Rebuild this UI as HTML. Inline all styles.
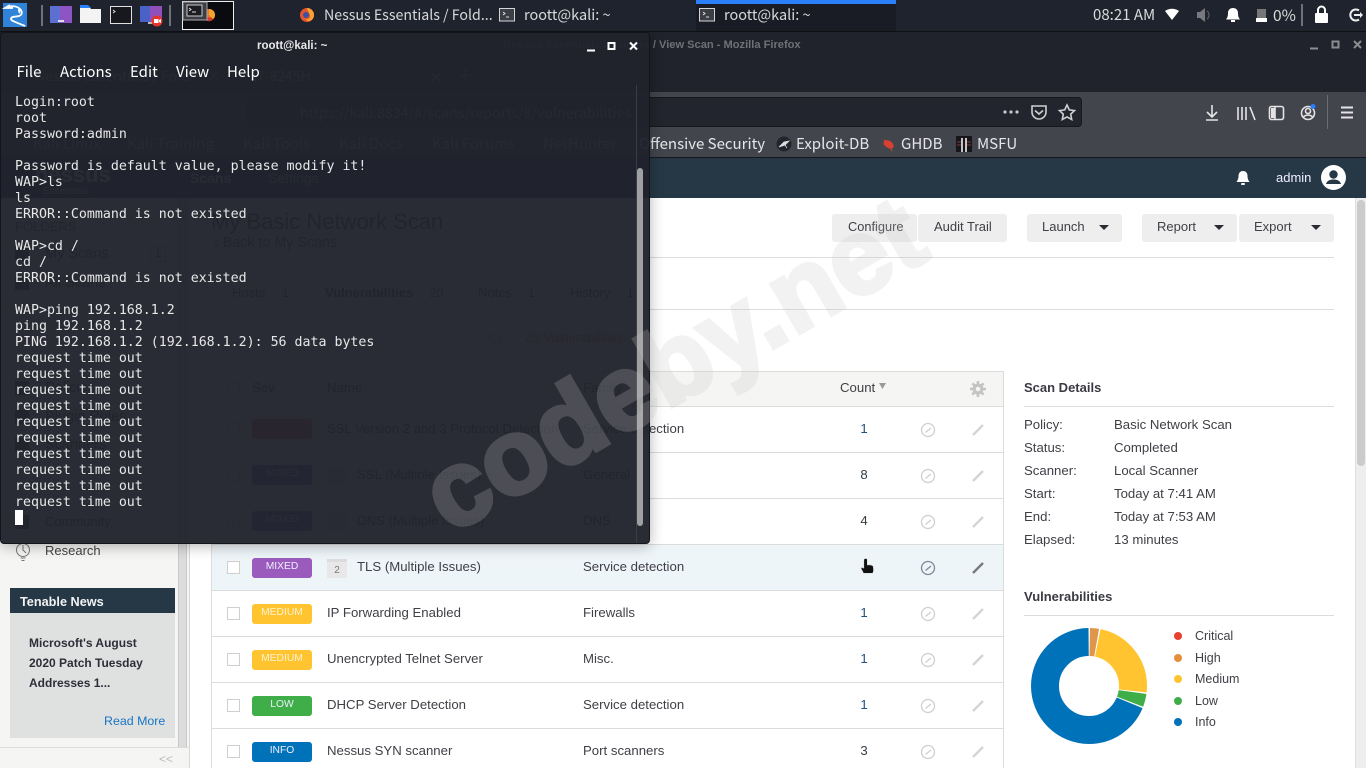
<!DOCTYPE html>
<html lang="en"><head><meta charset="utf-8"><title>Nessus Essentials</title>
<style>
*{box-sizing:border-box}
html,body{margin:0;padding:0;width:1366px;height:768px;overflow:hidden;background:#fff}
body{position:relative;font-family:"Liberation Sans",sans-serif;font-size:13.2px;color:#3f3f46}
.a{position:absolute}
.t{position:absolute;white-space:nowrap;line-height:16px;height:16px}
.c{font-family:"Noto Sans CJK JP","Liberation Sans",sans-serif}
.box{position:absolute;left:227px;width:13px;height:13px;border:1px solid #cfcfcf;background:#fff}
.bd{position:absolute;left:252px;width:60px;height:20px;border-radius:3px;color:#eef;font-size:10.3px;line-height:18px;text-align:center}
.ln{position:absolute;background:#dcdcdc;height:1px}
.btn{position:absolute;top:214px;height:28px;background:#eee;border-radius:3px;color:#3f3f46;line-height:25px;text-align:left;font-size:13px}
.arr{position:absolute;top:11px;width:0;height:0;border-left:5px solid transparent;border-right:5px solid transparent;border-top:5px solid #2b2b33}
.cnt{position:absolute;left:844px;width:40px;text-align:center;color:#24507c;line-height:16px}
.dk{color:#333d48}
.mn{position:absolute;color:#fff;font-size:15px;line-height:18px;top:63px}
svg{position:absolute;overflow:visible}
#term pre{position:absolute;left:14px;top:62px;margin:0;font:13.28px/16px "DejaVu Sans Mono",monospace;color:#e8e8e8}
</style></head><body>

<!-- firefox window -->
<div class="a" style="left:0;top:32px;width:1366px;height:60px;background:#20232c"></div>
<div class="t" style="left:503px;top:37px;font-size:11.1px;font-weight:bold;color:#6f7178">Nessus Essentials / Folders / View Scan - Mozilla Firefox</div>
<svg style="left:0;top:0" width="1366" height="60"><path d="M1310 48.500h8" stroke="#8a8c91" stroke-width="2"/><rect x="1332.500" y="41.500" width="6" height="6" fill="none" stroke="#8a8c91" stroke-width="2"/><path d="M1354 41l7 7M1361 41l-7 7" stroke="#8a8c91" stroke-width="2"/></svg>
<div class="a" style="left:225px;top:60px;width:220px;height:32px;background:#2a2c35"></div>
<div class="t c" style="left:35px;top:68px;font-size:14px;color:#b5b7bb">Nessus Essentials / Fold</div>
<div class="t c" style="left:207px;top:68px;font-size:14px;color:#b5b7bb">×</div>
<div class="t c" style="left:253px;top:68px;font-size:14px;color:#b5b7bb">i7-8245H</div>
<div class="t c" style="left:428px;top:68px;font-size:16px;color:#b5b7bb">×</div>
<svg style="left:458px;top:68px" width="16" height="16"><path d="M7.500 1v13M1 7.500h13" stroke="#83858a" stroke-width="1.500"/></svg>
<div class="a" style="left:0;top:92px;width:1366px;height:66px;background:#43454d"></div>
<div class="a" style="left:247px;top:97px;width:835px;height:30px;background:#23252e;border-radius:4px;border:1px solid #17181e"></div>
<div class="t c" style="left:300px;top:105px;font-size:14.2px;color:#a8a8ac">https://kali:8834/#/scans/reports/8/vulnerabilities</div>
<div class="a" style="left:0;top:157px;width:1366px;height:1px;background:#17181e"></div>
<svg style="left:1000px;top:100px" width="360" height="28" fill="none" stroke="#e4e4e6" stroke-width="1.600">
<circle cx="5" cy="12" r="1.600" fill="#c8c8ca" stroke="none"/><circle cx="11" cy="12" r="1.600" fill="#c8c8ca" stroke="none"/><circle cx="17" cy="12" r="1.600" fill="#c8c8ca" stroke="none"/>
<path d="M32 6h14v6a7 7 0 0 1-14 0z" stroke="#cfcfd2"/><path d="M35 10.500l4 3.500 4-3.500" stroke="#cfcfd2"/>
<path d="M67 5l2.300 4.900 5.200.7-3.800 3.600 1 5.300-4.700-2.600-4.700 2.600 1-5.300-3.800-3.600 5.200-.7z" stroke="#cfcfd2"/>
<path d="M212 5v12M207 12l5 5 5-5M206 20h12"/>
<path d="M238 7v13M242 7v13M246 7v13M250 7l5 13"/>
<rect x="269.500" y="6.500" width="14" height="13" rx="2"/><path d="M275 7v12"/><path d="M271 8h4v10h-4z" fill="#e4e4e6" stroke="none"/>
<circle cx="308" cy="13" r="6.500"/><circle cx="308" cy="11" r="2.500"/><path d="M303.500 17c2-2.500 7-2.500 9 0"/>
<path d="M341 7.500h12M341 12.500h12M341 17.500h12" stroke-width="2"/></svg>
<svg style="left:1304px;top:102px" width="10" height="10"><circle cx="9" cy="4.500" r="2.500" fill="#2a7ffb"/></svg>
<div class="a" style="left:1327px;top:95px;width:1px;height:34px;background:#6a6c73"></div>
<div class="t c" style="left:33px;top:136px;font-size:15px;color:#b8babe">Kali Linux</div>
<div class="t c" style="left:127px;top:136px;font-size:15px;color:#b8babe">Kali Training</div>
<div class="t c" style="left:243px;top:136px;font-size:15px;color:#b8babe">Kali Tools</div>
<div class="t c" style="left:339px;top:136px;font-size:15px;color:#b8babe">Kali Docs</div>
<div class="t c" style="left:432px;top:136px;font-size:15px;color:#b8babe">Kali Forums</div>
<div class="t c" style="left:543px;top:136px;font-size:15px;color:#b8babe">NetHunter</div>
<div class="t c" style="left:639px;top:136px;font-size:15px;color:#e6e6e8">Offensive Security</div>
<div class="t c" style="left:796px;top:136px;font-size:15px;color:#e6e6e8">Exploit-DB</div>
<div class="t c" style="left:901px;top:136px;font-size:15px;color:#e6e6e8">GHDB</div>
<div class="t c" style="left:977px;top:136px;font-size:15px;color:#e6e6e8">MSFU</div>
<svg style="left:776px;top:136px" width="16" height="16"><circle cx="8" cy="8" r="7.500" fill="#23252e"/><path d="M3 11l5-5 5-1-4 4zM9 9l2 3" stroke="#ddd" fill="#ddd" stroke-width=".8"/></svg>
<svg style="left:882px;top:137px" width="14" height="14"><ellipse cx="7" cy="7.500" rx="5.500" ry="3.500" transform="rotate(35 7 7)" fill="#d8412f"/><path d="M2 3l3 2M1 7h3M9 12l1 2" stroke="#d8412f"/></svg>
<svg style="left:956px;top:136px" width="16" height="16"><rect width="16" height="16" fill="#17151a"/><path d="M6 2v14M10 2v14" stroke="#eee" stroke-width="1.600"/><path d="M1 6h4M11 6h4M1 9h4M11 9h4" stroke="#7c3b3b"/></svg>

<!-- nessus header -->
<div class="a" style="left:0;top:158px;width:1366px;height:40px;background:#263846"></div>
<div class="t" style="left:35px;top:163px;font-size:22px;line-height:24px;height:24px;font-weight:bold;color:#fff">nessus</div>
<div class="t" style="left:43px;top:184px;font-size:10px;color:#dde">Essentials</div>
<div class="t" style="left:190px;top:170px;font-size:14px;font-weight:bold;color:#d9dde0">Scans</div>
<div class="t" style="left:268px;top:170px;font-size:14px;color:#bbc3c9">Settings</div>
<svg style="left:1235px;top:170px" width="16" height="16" fill="#fff"><path d="M8 1c-3 0-4.500 2.300-4.500 5 0 3.500-1.500 5-2 6h13c-.5-1-2-2.500-2-6 0-2.700-1.500-5-4.500-5z"/><rect x="6" y="13" width="4" height="2" rx="1"/></svg>
<div class="t" style="left:1276px;top:170px;font-size:13px;color:#eef">admin</div>
<svg style="left:1321px;top:165px" width="25" height="25"><circle cx="12.500" cy="12.500" r="12.500" fill="#fff"/><circle cx="12.500" cy="9.500" r="4.200" fill="#263846"/><path d="M5 19c1-3.500 4-4.500 7.500-4.500S19 15.500 20 19z" fill="#263846"/></svg>

<!-- sidebar -->
<div class="a" style="left:0;top:198px;width:190px;height:570px;background:#f5f5f3"></div>
<div class="a" style="left:178px;top:198px;width:9px;height:549px;background:#dcdcdc;border-left:1px solid #c9c9c9;border-right:1px solid #c9c9c9"></div>
<div class="a" style="left:189px;top:198px;width:1px;height:570px;background:#d8d8d8"></div>
<div class="a" style="left:0;top:747px;width:190px;height:1px;background:#dcdcdc"></div>
<div class="t" style="left:159px;top:751px;color:#bcbcbc;font-size:12px">&lt;&lt;</div>
<div class="t" style="left:15px;top:219px;font-size:13px;color:#666">FOLDERS</div>
<div class="a" style="left:15px;top:247px;width:14px;height:14px;background:#555"></div>
<div class="t" style="left:45px;top:246px;color:#3f3f46;font-size:14.500px">My Scans</div>
<div class="a" style="left:150px;top:246px;width:16px;height:16px;border:1px solid #bbb;font-size:11px;line-height:14px;text-align:center">1</div>
<div class="a" style="left:15px;top:276px;width:14px;height:14px;background:#555"></div>
<div class="t" style="left:45px;top:275px;color:#3f3f46;font-size:14.500px">All Scans</div>
<div class="a" style="left:15px;top:381px;width:14px;height:14px;background:#555"></div>
<div class="t" style="left:45px;top:380px;font-size:14.500px">Policies</div>
<div class="a" style="left:15px;top:410px;width:14px;height:14px;background:#555"></div>
<div class="t" style="left:45px;top:409px;font-size:14.500px">Plugin Rules</div>
<div class="a" style="left:15px;top:438px;width:14px;height:14px;background:#555"></div>
<div class="t" style="left:45px;top:437px;font-size:14.500px">Scanners</div>
<div class="a" style="left:15px;top:515px;width:14px;height:14px;background:#555"></div>
<div class="t" style="left:45px;top:514px;font-size:13px">Community</div>
<svg style="left:16px;top:542px" width="16" height="20" fill="none" stroke="#777"><circle cx="7" cy="8" r="6.500"/><path d="M7 3v5l3 3M4.500 16h5M5.500 18.500h3"/></svg>
<div class="t" style="left:45px;top:543px;font-size:13px;color:#444">Research</div>
<div class="a" style="left:10px;top:588px;width:165px;height:150px;background:#dfe0e0"></div>
<div class="a" style="left:10px;top:588px;width:165px;height:25px;background:#263846"></div>
<div class="t" style="left:20px;top:594px;font-size:12.700px;font-weight:bold;color:#f2f2f2">Tenable News</div>
<div class="a" style="left:29px;top:633px;width:140px;font-size:12px;line-height:20px;font-weight:bold;color:#2e2e3a;white-space:nowrap">Microsoft's August<br>2020 Patch Tuesday<br>Addresses 1...</div>
<div class="t" style="left:104px;top:713px;font-size:12.400px;color:#1a75c4">Read More</div>

<!-- main -->
<div class="a" style="left:1355px;top:198px;width:11px;height:570px;background:#eee;border-left:1px solid #dedede"></div>
<div class="a" style="left:1357px;top:200px;width:8px;height:266px;border-radius:4px;background:#cbcbcb"></div>
<div class="t" style="left:211px;top:208px;height:28px;line-height:28px;font-size:22px;color:#444">My Basic Network Scan</div>
<div class="t" style="left:214px;top:235px;font-size:14.300px;color:#555">‹ Back to My Scans</div>
<div class="btn" style="left:832px;width:85px;padding-left:16px;font-size:12.800px">Configure</div>
<div class="btn" style="left:918px;width:89px;padding-left:16px">Audit Trail</div>
<div class="btn" style="left:1027px;width:95px;padding-left:15px">Launch<i class="arr" style="left:72px"></i></div>
<div class="btn" style="left:1142px;width:95px;padding-left:15px">Report<i class="arr" style="left:72px"></i></div>
<div class="btn" style="left:1239px;width:95px;padding-left:15px">Export<i class="arr" style="left:72px"></i></div>
<div class="ln" style="left:190px;top:257px;width:1144px"></div>
<div class="ln" style="left:190px;top:309px;width:1144px"></div>
<div class="t" style="left:232px;top:285px;font-size:13px">Hosts</div>
<div class="t" style="left:282px;top:285px;font-size:12px">1</div>
<div class="t" style="left:325px;top:285px;font-size:13px;font-weight:bold">Vulnerabilities</div>
<div class="t" style="left:430px;top:285px;font-size:12px">20</div>
<div class="t" style="left:478px;top:285px;font-size:13px">Notes</div>
<div class="t" style="left:528px;top:285px;font-size:12px">1</div>
<div class="t" style="left:570px;top:285px;font-size:13px">History</div>
<div class="t" style="left:627px;top:285px;font-size:12px">1</div>
<svg style="left:489px;top:332px" width="14" height="14" fill="none" stroke="#999"><circle cx="6" cy="6" r="5"/></svg>
<div class="t" style="left:525px;top:330px;font-size:13px;color:#c06060">20 Vulnerabilities</div>

<!-- table -->
<div class="a" style="left:211px;top:371px;width:793px;height:397px;border:1px solid #dcdcdc;border-bottom:0"></div>
<div class="a" style="left:212px;top:372px;width:791px;height:34px;background:#f5f5f3"></div>
<div class="ln" style="left:212px;top:406px;width:791px"></div>
<div class="ln" style="left:212px;top:452px;width:791px"></div>
<div class="ln" style="left:212px;top:498px;width:791px"></div>
<div class="a" style="left:212px;top:544px;width:791px;height:47px;background:#eef5f9;border-top:1px solid #dcdcdc;border-bottom:1px solid #dcdcdc"></div>
<div class="ln" style="left:212px;top:636px;width:791px"></div>
<div class="ln" style="left:212px;top:682px;width:791px"></div>
<div class="ln" style="left:212px;top:728px;width:791px"></div>

<div class="box" style="top:382px"></div>
<div class="t" style="left:252px;top:380px">Sev</div>
<div class="t" style="left:327px;top:380px">Name</div>
<div class="t" style="left:583px;top:380px">Family</div>
<div class="t" style="left:840px;top:380px">Count</div>
<svg style="left:879px;top:383px" width="8" height="7"><path d="M0 0h7L3.500 6z" fill="#9a9a9a"/></svg>
<svg style="left:970px;top:381px" width="16" height="16" fill="#c4c4c4"><path d="M8 2.500a5.500 5.500 0 1 0 0 11 5.500 5.500 0 0 0 0-11zm0 3.200a2.300 2.300 0 1 1 0 4.600 2.300 2.300 0 0 1 0-4.600z" fill-rule="evenodd"/><path d="M6.700 0h2.600v3H6.700zM6.700 13h2.600v3H6.700zM0 6.700h3v2.600H0zM13 6.700h3v2.600h-3zM1.500 3.300l1.800-1.800 2 2-1.800 1.800zM10.700 12.500l1.800-1.800 2 2-1.800 1.800zM12.700 1.500l1.800 1.800-2 2-1.800-1.800zM3.300 10.700l1.800 1.800-2 2-1.800-1.800z"/></svg>

<div class="box" style="top:423px"></div><div class="bd" style="top:419px;background:#c06a6a"></div>
<div class="t" style="left:327px;top:421px">SSL Version 2 and 3 Protocol Detection</div>
<div class="t" style="left:583px;top:421px">Service detection</div><div class="cnt" style="top:421px">1</div>

<div class="box" style="top:469px"></div><div class="bd" style="top:465px;background:#6470b5">MIXED</div>
<div class="a" style="left:327px;top:466px;width:20px;height:18px;background:#e3e3e3"></div>
<div class="t" style="left:357px;top:467px">SSL (Multiple Issues)</div>
<div class="t" style="left:583px;top:467px">General</div><div class="cnt dk" style="top:467px">8</div>

<div class="box" style="top:515px"></div><div class="bd" style="top:511px;background:#6470b5">MIXED</div>
<div class="a" style="left:327px;top:512px;width:20px;height:18px;background:#e3e3e3"></div>
<div class="t" style="left:357px;top:513px">DNS (Multiple Issues)</div>
<div class="t" style="left:583px;top:513px">DNS</div><div class="cnt dk" style="top:513px">4</div>

<div class="box" style="top:561px"></div><div class="bd" style="top:558px;background:#9a5bbd">MIXED</div>
<div class="a" style="left:327px;top:559px;width:20px;height:19px;background:#e8e8e8;font-size:10px;line-height:17px;text-align:center;color:#777;border-top:3px solid #dcdcdc">2</div>
<div class="t" style="left:357px;top:559px">TLS (Multiple Issues)</div>
<div class="t" style="left:583px;top:559px">Service detection</div>

<div class="box" style="top:607px"></div><div class="bd" style="top:604px;background:#ffc430;color:#fdf2d0">MEDIUM</div>
<div class="t" style="left:327px;top:605px">IP Forwarding Enabled</div>
<div class="t" style="left:583px;top:605px">Firewalls</div><div class="cnt" style="top:605px">1</div>

<div class="box" style="top:653px"></div><div class="bd" style="top:650px;background:#ffc430;color:#fdf2d0">MEDIUM</div>
<div class="t" style="left:327px;top:651px">Unencrypted Telnet Server</div>
<div class="t" style="left:583px;top:651px">Misc.</div><div class="cnt" style="top:651px">1</div>

<div class="box" style="top:699px"></div><div class="bd" style="top:696px;background:#3fae49">LOW</div>
<div class="t" style="left:327px;top:697px">DHCP Server Detection</div>
<div class="t" style="left:583px;top:697px">Service detection</div><div class="cnt" style="top:697px">1</div>

<div class="box" style="top:745px"></div><div class="bd" style="top:742px;background:#0072b9">INFO</div>
<div class="t" style="left:327px;top:743px">Nessus SYN scanner</div>
<div class="t" style="left:583px;top:743px">Port scanners</div><div class="cnt dk" style="top:743px">3</div>

<svg style="left:0;top:0" width="1366" height="768" fill="none">
<g stroke="#cfcfcf" stroke-width="1.300">
<circle cx="928" cy="430" r="6.500"/><path d="M925.500 432.500L931 428"/>
<circle cx="928" cy="476" r="6.500"/><path d="M925.500 478.500L931 474"/>
<circle cx="928" cy="522" r="6.500"/><path d="M925.500 524.500L931 520"/>
<circle cx="928" cy="614" r="6.500"/><path d="M925.500 616.500L931 612"/>
<circle cx="928" cy="660" r="6.500"/><path d="M925.500 662.500L931 658"/>
<circle cx="928" cy="706" r="6.500"/><path d="M925.500 708.500L931 704"/>
<circle cx="928" cy="752" r="6.500"/><path d="M925.500 754.500L931 750"/>
</g>
<g stroke="#7d8a94" stroke-width="1.300"><circle cx="928" cy="568" r="6.500"/><path d="M925.500 570.500L931 566"/></g>
<g stroke="#d4d4d4" stroke-width="2.400">
<path d="M973 435l10-10"/><path d="M973 481l10-10"/><path d="M973 527l10-10"/><path d="M973 619l10-10"/><path d="M973 665l10-10"/><path d="M973 711l10-10"/><path d="M973 757l10-10"/>
</g>
<path d="M973 573l10-10" stroke="#77797d" stroke-width="2.400"/>
</svg>
<svg style="left:860px;top:557px" width="16" height="18"><path d="M6 1.500c1 0 1.300.8 1.300 1.500v5l1-.3 1 .3 1-.2 1 .3 1.700.7.500 2.500v3l-.8 2H3.500L1 11.500l.8-1.300 2 1V3c0-.8 1-1.500 2.200-1.500z" fill="#111" stroke="#ddd" stroke-width=".6"/></svg>

<!-- details -->
<div class="t" style="left:1024px;top:380px;font-size:13px;font-weight:bold;color:#3a3a44">Scan Details</div>
<div class="ln" style="left:1024px;top:406px;width:310px"></div>
<div class="t" style="left:1024px;top:417px">Policy:</div><div class="t" style="left:1114px;top:417px">Basic Network Scan</div>
<div class="t" style="left:1024px;top:440px">Status:</div><div class="t" style="left:1114px;top:440px">Completed</div>
<div class="t" style="left:1024px;top:463px">Scanner:</div><div class="t" style="left:1114px;top:463px">Local Scanner</div>
<div class="t" style="left:1024px;top:486px">Start:</div><div class="t" style="left:1114px;top:486px">Today at 7:41 AM</div>
<div class="t" style="left:1024px;top:509px">End:</div><div class="t" style="left:1114px;top:509px">Today at 7:53 AM</div>
<div class="t" style="left:1024px;top:532px">Elapsed:</div><div class="t" style="left:1114px;top:532px">13 minutes</div>
<div class="t" style="left:1024px;top:589px;font-size:13px;font-weight:bold;color:#3a3a44">Vulnerabilities</div>
<div class="ln" style="left:1024px;top:615px;width:310px"></div>
<svg style="left:1031px;top:628px" width="116" height="116" viewBox="-58 -58 116 116" fill="none" stroke-width="28">
<g transform="rotate(-90)">
<circle r="44" stroke="#0072b9" pathLength="360" stroke-dasharray="247 113" stroke-dashoffset="-112.500"/>
<circle r="44" stroke="#3fae49" pathLength="360" stroke-dasharray="13 347" stroke-dashoffset="-98"/>
<circle r="44" stroke="#ffc430" pathLength="360" stroke-dasharray="85 275" stroke-dashoffset="-11.500"/>
<circle r="44" stroke="#e0964a" pathLength="360" stroke-dasharray="9 351" stroke-dashoffset="-1"/>
</g></svg>
<svg style="left:1170px;top:628px" width="16" height="104">
<circle cx="8" cy="8" r="4" fill="#e8412f"/><circle cx="8" cy="30" r="4" fill="#e58f3c"/><circle cx="8" cy="51" r="4" fill="#ffc430"/><circle cx="8" cy="73" r="4" fill="#3fae49"/><circle cx="8" cy="94" r="4" fill="#0072b9"/></svg>
<div class="t" style="left:1195px;top:628px;font-size:12.500px">Critical</div>
<div class="t" style="left:1195px;top:650px;font-size:12.500px">High</div>
<div class="t" style="left:1195px;top:671px;font-size:12.500px">Medium</div>
<div class="t" style="left:1195px;top:693px;font-size:12.500px">Low</div>
<div class="t" style="left:1195px;top:714px;font-size:12.500px">Info</div>

<!-- terminal -->
<div id="term" class="a" style="left:0;top:32px;width:650px;height:512px;background:rgba(32,35,44,.955);border-radius:4px;border:1px solid #14151a;box-shadow:0 2px 14px rgba(0,0,0,.3)">
<div class="t" style="left:256px;top:5px;font-size:11.500px;font-weight:bold;color:#e8e8e8">roott@kali: ~</div>
<svg style="left:585px;top:6px" width="60" height="14" fill="none" stroke="#fff" stroke-width="2"><path d="M1 11.500h8"/><rect x="22.500" y="4" width="6" height="6"/><path d="M44 3.500l7 7M51 3.500l-7 7"/></svg>
<div class="mn c" style="left:15.500px;top:30px">File</div><div class="mn c" style="left:59px;top:30px">Actions</div><div class="mn c" style="left:129px;top:30px">Edit</div><div class="mn c" style="left:175px;top:30px">View</div><div class="mn c" style="left:226px;top:30px">Help</div>
<pre>Login:root
root
Password:admin

Password is default value, please modify it!
WAP&gt;ls
ls
ERROR::Command is not existed

WAP&gt;cd /
cd /
ERROR::Command is not existed

WAP&gt;ping 192.168.1.2
ping 192.168.1.2
PING 192.168.1.2 (192.168.1.2): 56 data bytes
request time out
request time out
request time out
request time out
request time out
request time out
request time out
request time out
request time out
request time out</pre>
<div class="a" style="left:14px;top:477px;width:8px;height:15px;background:#fff"></div>
<div class="a" style="left:635px;top:52px;width:1px;height:458px;background:#3a3d46"></div>
<div class="a" style="left:636px;top:135px;width:6px;height:358px;border-radius:3px;background:#a0a0a2"></div>
</div>

<!-- watermark -->
<div class="a" style="left:390px;top:283px;width:620px;height:130px;font:bold 107px/130px 'Liberation Sans',sans-serif;color:#c8c8c8;-webkit-text-stroke:4px #c8c8c8;opacity:.22;transform:rotate(-30deg);white-space:nowrap;pointer-events:none">codeby.net</div>

<!-- top panel -->
<div class="a" style="left:0;top:0;width:1366px;height:32px;background:#1f232d;border-bottom:1px solid #0f1014"></div>
<div class="a" style="left:696px;top:0;width:200px;height:31px;background:#191c24"></div>
<div class="a" style="left:696px;top:0;width:200px;height:4px;background:#2a7ffb"></div>
<svg style="left:0;top:0" width="340" height="32">
<rect x="3" y="3" width="24" height="24" fill="#2f83d8"/>
<path d="M5 8c6-3 12-2 15 1 3 3 2 6-1 7-3 1-8 0-8 3 0 2 5 3 14 7M10 5L5 8l8 0M19 13c1-1 0-3-1-3" fill="none" stroke="#fff" stroke-width="1.800"/>
<rect x="41" y="5" width="2" height="21" fill="#6f7178"/>
<rect x="50" y="6" width="22" height="17" fill="#5d6fd0"/><rect x="60" y="6" width="12" height="17" fill="#9a4fc0" opacity=".8"/><rect x="58" y="20" width="6" height="2" fill="#dde"/>
<path d="M80 6h9l2 3h10v14H80z" fill="#f3f3f3"/><path d="M80 5h8l3 3H80z" fill="#2a7ffb"/>
<rect x="110.500" y="6.500" width="21" height="17" fill="#17181e" stroke="#e0e0e0"/><path d="M113 10l2 1.500-2 1.500" stroke="#ddd" fill="none"/>
<rect x="140" y="6" width="22" height="16" fill="#4a62c8"/><rect x="150" y="6" width="12" height="16" fill="#a24bb8" opacity=".8"/><rect x="148" y="22" width="8" height="2" fill="#bbb"/>
<circle cx="157" cy="21" r="5.500" fill="#e5352c"/><rect x="154" y="19" width="4.500" height="4" fill="#fff"/><path d="M159 20l2-1v4l-2-1z" fill="#fff"/>
<rect x="169" y="5" width="2" height="21" fill="#6f7178"/>
<rect x="182.500" y="1.500" width="51" height="28" fill="#0a0b0f" stroke="#eee"/>
<circle cx="209" cy="15" r="6" fill="#e8782a"/><path d="M207 21a6 6 0 0 0 7-3l-7-1z" fill="#d33a2c"/><path d="M209 9a6 6 0 0 1 6 6c0 2-1 3-2 4l-4-4z" fill="#f6a42f"/>
<rect x="183" y="2" width="24" height="18" fill="#3c3e45" stroke="#aaa"/><rect x="187" y="5" width="15" height="11" fill="#1c1d22" stroke="#ccc"/><path d="M189 8l2 1.500-2 1.500M192 12h4" stroke="#ddd" fill="none"/>
<circle cx="307" cy="15" r="7" fill="#e5552b"/><path d="M307 8a7 7 0 0 1 7 7c0 4-3 6-6 6l-3-2c3 1 6-1 5-4-1-3-3-5-3-7z" fill="#f8a431"/><circle cx="306" cy="15" r="3" fill="#3752a8"/>
</svg>
<div class="t c" style="left:324px;top:7px;font-size:14.200px;color:#d9dadc">Nessus Essentials / Fold...</div>
<svg style="left:499px;top:7px" width="320" height="18" fill="none"><rect x=".5" y="1.500" width="15" height="12.500" fill="#3c3e45" stroke="#d5d5d5"/><path d="M4 5l2 1.500-2 1.500M7 10h3" stroke="#ddd"/><rect x="200.500" y="1.500" width="15" height="12.500" fill="#3c3e45" stroke="#d5d5d5"/><path d="M204 5l2 1.500-2 1.500M207 10h3" stroke="#ddd"/></svg>
<div class="t c" style="left:524px;top:7px;font-size:14.500px;color:#d9dadc">roott@kali: ~</div>
<div class="t c" style="left:724px;top:7px;font-size:14.500px;color:#d9dadc">roott@kali: ~</div>
<div class="t c" style="left:1093px;top:7px;font-size:15px;color:#d9dadc">08:21 AM</div>
<div class="t c" style="left:1273px;top:7px;font-size:15.500px;color:#d9dadc">0%</div>
<svg style="left:1160px;top:0" width="206" height="32">
<path d="M5 11c4-3 10-3 14 0l-7 9z" fill="#fff"/>
<path d="M37 12h3l5-4v14l-5-4h-3z" fill="#77797f"/><path d="M47 11a5 5 0 0 1 0 8" stroke="#66686e" fill="none"/>
<path d="M73 8c-3 0-5 2-5 5 0 4-1 5-2 6.500h14c-1-1.500-2-2.500-2-6.500 0-3-2-5-5-5z" fill="#fff"/><rect x="71" y="20" width="4" height="2" fill="#fff"/>
<rect x="97" y="9" width="9" height="9" fill="#777"/><rect x="96" y="18" width="11" height="4" fill="#fff"/>
<rect x="141" y="4" width="2" height="22" fill="#6f7178"/>
<rect x="155" y="13" width="13" height="10" rx="1" fill="#fff"/><path d="M158 13v-3a3.500 3.500 0 0 1 7 0v3" fill="none" stroke="#fff" stroke-width="2"/>
<path d="M199 10.500a5.500 5.500 0 1 0 0 9" fill="none" stroke="#eee" stroke-width="2"/><path d="M194 15h8" stroke="#eee" stroke-width="2"/><path d="M200 12l3 3-3 3z" fill="#eee"/>
</svg>
</body></html>
